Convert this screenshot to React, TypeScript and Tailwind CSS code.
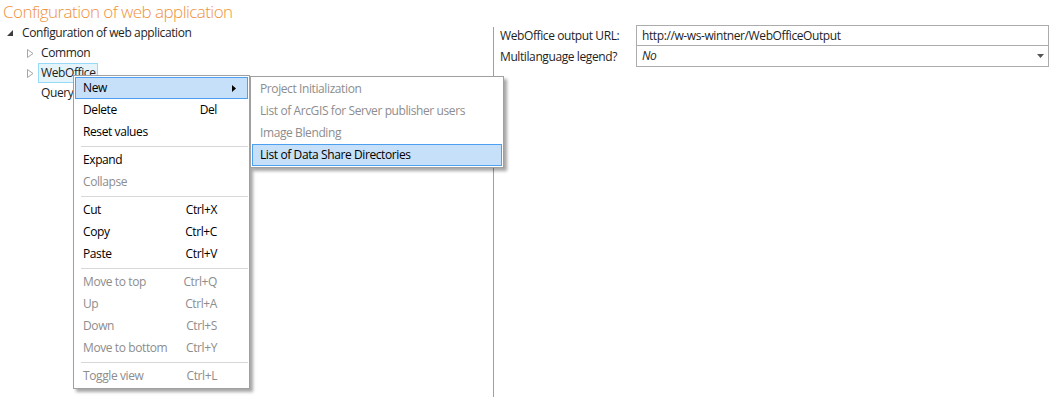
import React from 'react';

type MenuItem =
  | { kind: 'item'; label: string; shortcut?: string; disabled?: boolean; active?: boolean; submenu?: boolean }
  | { kind: 'sep' };

const contextItems: MenuItem[] = [
  { kind: 'item', label: 'New', active: true, submenu: true },
  { kind: 'item', label: 'Delete', shortcut: 'Del' },
  { kind: 'item', label: 'Reset values' },
  { kind: 'sep' },
  { kind: 'item', label: 'Expand' },
  { kind: 'item', label: 'Collapse', disabled: true },
  { kind: 'sep' },
  { kind: 'item', label: 'Cut', shortcut: 'Ctrl+X' },
  { kind: 'item', label: 'Copy', shortcut: 'Ctrl+C' },
  { kind: 'item', label: 'Paste', shortcut: 'Ctrl+V' },
  { kind: 'sep' },
  { kind: 'item', label: 'Move to top', shortcut: 'Ctrl+Q', disabled: true },
  { kind: 'item', label: 'Up', shortcut: 'Ctrl+A', disabled: true },
  { kind: 'item', label: 'Down', shortcut: 'Ctrl+S', disabled: true },
  { kind: 'item', label: 'Move to bottom', shortcut: 'Ctrl+Y', disabled: true },
  { kind: 'sep' },
  { kind: 'item', label: 'Toggle view', shortcut: 'Ctrl+L', disabled: true },
];

const subItems = [
  { label: 'Project Initialization', disabled: true },
  { label: 'List of ArcGIS for Server publisher users', disabled: true },
  { label: 'Image Blending', disabled: true },
  { label: 'List of Data Share Directories', active: true },
];

const CollapsedArrow = () => (
  <svg width="7" height="9" viewBox="0 0 7 9" className="shrink-0">
    <path d="M0.5 0.5 L6 4.5 L0.5 8.5 Z" fill="none" stroke="#a6a6a6" strokeWidth="1" />
  </svg>
);

const ExpandedArrow = () => (
  <svg width="6" height="6" viewBox="0 0 6 6" className="shrink-0">
    <path d="M6 0 L6 6 L0 6 Z" fill="#3c3c3c" />
  </svg>
);

const App: React.FC = () => {
  return (
    <div className="relative w-[1053px] h-[397px] bg-white overflow-hidden flex flex-col font-['Open_Sans',sans-serif] text-[12px] tracking-[-0.4px] text-[#1e1e1e]">
      {/* Title */}
      <div className="h-[23px] pl-[3px] text-[17px] leading-[23px] font-light tracking-[-0.55px] text-[#f0923b] whitespace-nowrap">
        Configuration of web application
      </div>

      <div className="flex flex-1">
        {/* Tree */}
        <div className="w-[493px] pl-[7px]">
          <div className="h-5 flex items-center gap-[9px]">
            <ExpandedArrow />
            <span>Configuration of web application</span>
          </div>
          <div className="pl-[20px]">
            <div className="h-5 flex items-center gap-[7px]">
              <CollapsedArrow />
              <span>Common</span>
            </div>
            <div className="h-5 flex items-center gap-[4px]">
              <CollapsedArrow />
              <span className="h-[20px] px-[2px] flex items-center bg-[#e5f3fb] border border-[#99d9f8]">WebOffice</span>
            </div>
            <div className="h-5 flex items-center pl-[14px]">
              <span>QueryConfiguration</span>
            </div>
          </div>
        </div>

        {/* Divider */}
        <div className="w-px mt-[4px] bg-[#a0a0a0]" />

        {/* Properties */}
        <div className="pl-[6px] pt-[2px]">
          <div className="grid grid-cols-[136px_413px]">
            <div className="h-[21px] flex items-center">WebOffice output URL:</div>
            <div className="h-[21px] flex items-center px-[5px] border border-[#acacac]">
              http://w-ws-wintner/WebOfficeOutput
            </div>
            <div className="h-[21px] flex items-center">Multilanguage legend?</div>
            <div className="h-[21px] flex items-center justify-between pl-[5px] pr-[4px] border border-t-0 border-[#acacac] italic">
              <span>No</span>
              <svg width="7" height="4" viewBox="0 0 7 4">
                <path d="M0 0 L7 0 L3.5 4 Z" fill="#555" />
              </svg>
            </div>
          </div>
        </div>
      </div>

      {/* Context menu */}
      <div className="absolute left-[73px] top-[75px] w-[177px] py-px px-px bg-white border border-[#a0a0a0] shadow-[3px_3px_3px_rgba(0,0,0,0.35)]">
        {contextItems.map((it, i) =>
          it.kind === 'sep' ? (
            <div key={i} className="h-[6px] flex items-center pl-[6px]">
              <div className="h-px w-full bg-[#d7d7d7]" />
            </div>
          ) : (
            <div
              key={i}
              className={
                'h-[22px] flex items-center pl-[7px] pr-[10px] border ' +
                (it.active ? 'bg-[#c7e0f9] border-[#4d9fef] ' : 'border-transparent ') +
                (it.disabled ? 'text-[#8d8d8d]' : 'text-black')
              }
            >
              <span className="flex-1">{it.label}</span>
              {it.shortcut && <span className="pr-[20px]">{it.shortcut}</span>}
              {it.submenu && (
                <svg width="4" height="7" viewBox="0 0 4 7" className="mr-[1px]">
                  <path d="M0 0 L4 3.5 L0 7 Z" fill="#000" />
                </svg>
              )}
            </div>
          )
        )}
      </div>

      {/* Submenu */}
      <div className="absolute left-[250px] top-[76px] w-[254px] p-px bg-white border border-[#a0a0a0] shadow-[3px_3px_3px_rgba(0,0,0,0.35)]">
        {subItems.map((it, i) => (
          <div
            key={i}
            className={
              'h-[22px] flex items-center pl-[7px] border ' +
              (it.active ? 'bg-[#c7e0f9] border-[#4d9fef] text-black' : 'border-transparent text-[#8d8d8d]')
            }
          >
            {it.label}
          </div>
        ))}
      </div>
    </div>
  );
};

export default App;
